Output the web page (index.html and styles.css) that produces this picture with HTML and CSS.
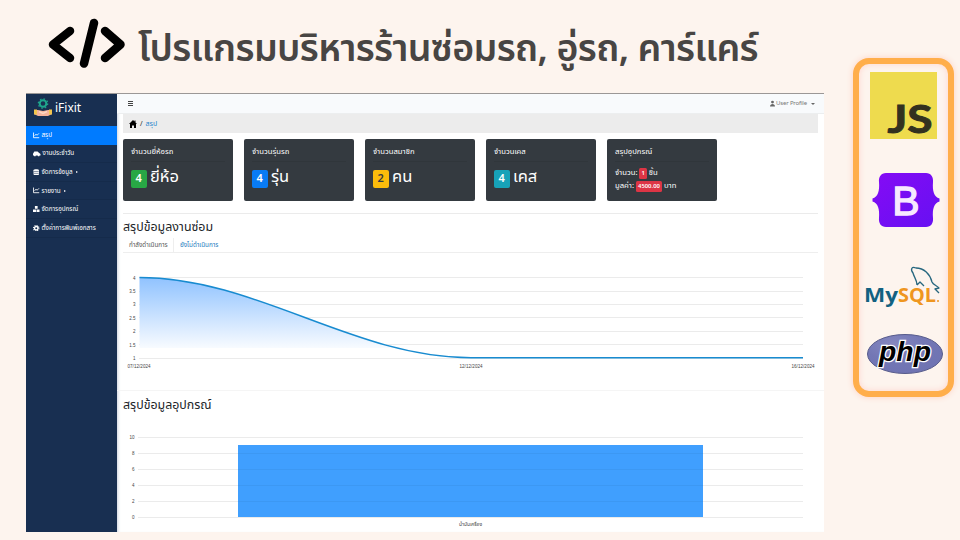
FILE: index.html
```html
<!DOCTYPE html>
<html lang="th">
<head>
<meta charset="utf-8">
<title>iFixit</title>
<link rel="stylesheet" href="styles.css">
</head>
<body>
<div class="slide">
  <div class="content">
    <header class="title">
      <svg class="code-icon" viewBox="0 0 78 52" width="78" height="52"><path d="M23 14 6 27.500 23 41M47 6 37 46.500M58 14 73.500 27.500 58 41"/></svg>
      <h1>โปรแกรมบริหารร้านซ่อมรถ, อู่รถ, คาร์แคร์</h1>
    </header>
    <div class="window">
      <aside class="sidebar">
        <div class="brand">
          <svg width="20" height="19" viewBox="0 0 20 19"><circle cx="10" cy="5.500" r="3.300" fill="none" stroke="#1fa58c" stroke-width="2"/><circle cx="10" cy="5.500" r="4.700" fill="none" stroke="#1fa58c" stroke-width="1.200" stroke-dasharray="1.600 2.080"/><path d="M1 12h4l5 1 5-1h4v4l-4 2H5l-4-2z" fill="#f6b49b"/><path d="M1 11.500h3v5H1zM16 11.500h3v5h-3z" fill="#f3c64e"/><path d="M6 13.500l4 2 4-2" fill="none" stroke="#fbd7c4" stroke-width="1.500"/></svg>
          <span>iFixit</span>
        </div>
        <nav class="menu">
          <a class="item active"><svg viewBox="0 0 12 12"><path class="line" d="M1 1v9.500h10.500M3 7l2.500-3 2 2L11 2.500"/></svg><span>สรุป</span></a>
          <a class="item"><svg class="wide" viewBox="0 0 14 12"><path d="M0 7 2.500 2.500h6L11 5l3 2.500V10H0z"/><circle cx="3.500" cy="10" r="1.700"/><circle cx="10.500" cy="10" r="1.700"/></svg><span>งานประจำวัน</span></a>
          <a class="item"><svg viewBox="0 0 12 12"><path d="M1 2.500C1 0 11 0 11 2.500v7c0 3-10 3-10 0z"/><path class="cut" d="M1.500 4.500h9M1.500 8h9"/></svg><span>จัดการข้อมูล</span><i></i></a>
          <a class="item"><svg viewBox="0 0 12 12"><path class="line" d="M1 1v9.500h10.500M3 7l2.500-3 2 2L11 2.500"/></svg><span>รายงาน</span><i></i></a>
          <a class="item"><svg viewBox="0 0 12 12"><path d="M3.500 0h5v5h-5zM0 6.500h5.500V12H0zM6.500 6.500H12V12H6.500z"/></svg><span>จัดการอุปกรณ์</span></a>
          <a class="item"><svg viewBox="0 0 12 12"><circle cx="6" cy="6" r="3.200" fill="none" stroke="#fff" stroke-width="2.600"/><circle cx="6" cy="6" r="5" fill="none" stroke="#fff" stroke-width="2" stroke-dasharray="2 1.930"/></svg><span>ตั้งค่าการพิมพ์เอกสาร</span></a>
        </nav>
      </aside>
      <main class="main">
        <div class="topbar"><span class="burger"><b></b><b></b><b></b></span>
          <span class="user"><svg width="6" height="7" viewBox="0 0 12 14"><circle cx="6" cy="3.500" r="3.400"/><path d="M0 14c0-8 12-8 12 0z"/></svg><span>User Profile</span><i></i></span>
        </div>
        <div class="breadcrumb"><svg width="8" height="8" viewBox="0 0 16 16"><path d="M8 0 0 8h2v8h4v-5h4v5h4V8h2l-3-3V1h-2v2z"/></svg><span>/</span><a>สรุป</a></div>
        <section class="cards">
          <article class="card"><h3>จำนวนยี่ห้อรถ</h3><p class="big"><b class="green">4</b><span>ยี่ห้อ</span></p></article>
          <article class="card"><h3>จำนวนรุ่นรถ</h3><p class="big"><b class="blue">4</b><span>รุ่น</span></p></article>
          <article class="card"><h3>จำนวนสมาชิก</h3><p class="big"><b class="yellow">2</b><span>คน</span></p></article>
          <article class="card"><h3>จำนวนเคส</h3><p class="big"><b class="teal">4</b><span>เคส</span></p></article>
          <article class="card"><h3>สรุปอุปกรณ์</h3><div class="small"><p>จำนวน: <b>1</b> ชิ้น</p><p>มูลค่า: <b>4500.00</b> บาท</p></div></article>
        </section>
        <section class="jobs">
          <h2>สรุปข้อมูลงานซ่อม</h2>
          <div class="tabs"><span class="tab on">กำลังดำเนินการ</span><span class="tab">ยังไม่ดำเนินการ</span></div>
          <svg class="chart" width="707" height="138" viewBox="117 253 707 138">
            <defs><linearGradient id="area" x1="0" y1="277" x2="0" y2="348" gradientUnits="userSpaceOnUse"><stop offset="0" stop-color="#8fc2ff"/><stop offset="1" stop-color="#f8fbff"/></linearGradient><clipPath id="fade"><path d="M139 270H803V348H139z"/></clipPath></defs>
            <path class="grid" d="M139 277.500H803M139 291.500H803M139 304.500H803M139 317.500H803M139 331.500H803M139 344.500H803M139 358.500H803"/>
            <path fill="url(#area)" clip-path="url(#fade)" d="M139.500 277.500C257 277.500 353 357.700 471 357.700H139.500z"/>
            <path class="curve" d="M139.500 277.500C257 277.500 353 357.700 471 357.700H803"/>
            <g class="axis end"><text x="135.500" y="279.500">4</text><text x="135.500" y="292.800">3.5</text><text x="135.500" y="306.300">3</text><text x="135.500" y="319.600">2.5</text><text x="135.500" y="333">2</text><text x="135.500" y="346.500">1.5</text><text x="135.500" y="360">1</text></g>
            <g class="axis mid"><text x="139" y="367.500" textLength="23">07/12/2024</text><text x="471" y="367.500" textLength="23">12/12/2024</text><text x="803" y="367.500" textLength="23">16/12/2024</text></g>
          </svg>
        </section>
        <section class="parts">
          <h2>สรุปข้อมูลอุปกรณ์</h2>
          <svg class="chart" width="707" height="112" viewBox="117 420 707 112">
            <path class="grid" d="M138 437.500H803M138 453.500H803M138 469.500H803M138 485.500H803M138 501.500H803M138 517.500H803"/>
            <rect x="238" y="445" width="465" height="72" fill="#409ffe"/>
            <path class="faint" d="M238 453.500H703M238 469.500H703M238 485.500H703M238 501.500H703"/>
            <g class="axis end"><text x="134.500" y="439">10</text><text x="134.500" y="455">8</text><text x="134.500" y="471">6</text><text x="134.500" y="487">4</text><text x="134.500" y="503">2</text><text x="134.500" y="519">0</text></g>
            <g class="axis mid"><text x="470.500" y="526" textLength="23" lengthAdjust="spacingAndGlyphs">น้ำมันเครื่อง</text></g>
          </svg>
        </section>
      </main>
    </div>
  </div>
  <aside class="stack">
    <svg class="js" width="67" height="67" viewBox="0 0 67 67"><path fill="#eedb4e" d="M0 0h67v67H0z"/><text x="17.500" y="60.500" textLength="45" lengthAdjust="spacingAndGlyphs">JS</text></svg>
    <svg class="bootstrap" width="68" height="54" viewBox="0 0 68 54"><defs><linearGradient id="bs" x2="1" y2="1"><stop stop-color="#850bf5"/><stop offset="1" stop-color="#6610f2"/></linearGradient></defs><path fill="url(#bs)" d="M14 0H54C59 0 61.500 4 61 9 60.300 18 62 24 67.500 25.500v3C62 30 60.300 36 61 45 61.500 50 59 54 54 54H14C9 54 6.500 50 7 45 7.700 36 6 30 .5 28.500v-3C6 24 7.700 18 7 9 6.500 4 9 0 14 0z"/><text x="34" y="41.500" text-anchor="middle">B</text></svg>
    <svg class="mysql" width="80" height="42" viewBox="0 0 80 42"><path d="M53 20C53 15 50 12 49 8 46 4 48 1 52 3 60 3 66 9 68 17 69 20 74 21 75 23L71 24 75 28M53 20 56 17 60 21"/><text x="0" y="37" textLength="34" lengthAdjust="spacingAndGlyphs" fill="#126181">My</text><text x="34" y="37" textLength="38" lengthAdjust="spacingAndGlyphs" fill="#ef961f">SQL</text><circle cx="74" cy="36" r="1" fill="#ef961f"/></svg>
    <svg class="php" width="76" height="40" viewBox="0 0 76 40"><defs><radialGradient id="pg" cx=".35" cy=".25" r=".8"><stop stop-color="#8688c0"/><stop offset=".5" stop-color="#7377b5"/><stop offset="1" stop-color="#6f73b2"/></radialGradient></defs><ellipse cx="38" cy="20" rx="37.500" ry="19.500" fill="url(#pg)" stroke="#575b8b"/><text x="12" y="26.500" textLength="52" lengthAdjust="spacingAndGlyphs">php</text></svg>
  </aside>
</div>
</body>
</html>
```
FILE: styles.css
```css
*{box-sizing:border-box}
body{margin:0;width:960px;height:540px;overflow:hidden;background:#fdf4ee;font-family:"Noto Sans Thai","Noto Sans",sans-serif;color:#212529}
h1,h2,h3,p{margin:0;font-weight:400}
svg{flex:none;display:block}
.slide{display:flex;height:540px;padding-left:26px;gap:29px}
.content{width:798px;flex:none}
.title{height:93px;display:flex;align-items:flex-start;padding:17px 0 0 21px;gap:13px}
.code-icon{fill:none;stroke:#000;stroke-width:8.500;stroke-linecap:round;stroke-linejoin:round}
h1{font-size:37.500px;line-height:66px;font-weight:600;letter-spacing:-.63px;color:#484543;white-space:nowrap}
.window{display:flex;height:439px;background:#fff;border-top:1px solid #9b9796}
.sidebar{width:91px;flex:none;background:#182f51;color:#fff}
.brand{height:32px;display:flex;align-items:center;padding:0 0 5px 7px;gap:2px;font-size:12px}
.item{height:18.600px;display:flex;align-items:center;padding:0 0 0 7px;gap:2px;font-size:6.300px;white-space:nowrap;border-bottom:1px solid #152b4b}
.item.active{background:#007bff;border:0}
.item svg{width:6.500px;height:6.500px;fill:#fff}
.item svg.wide{width:7.500px}
.item .line{fill:none;stroke:#fff;stroke-width:1.600}
.item .cut{stroke:#182f51}
.item i{border:1.500px solid transparent;border-left:2px solid #fff;margin-left:1px}
.main{flex:1;min-width:0;box-shadow:inset 3px 0 3px -2px #ccd3df}
.topbar{height:20px;background:#f8fafc;display:flex;align-items:center;justify-content:space-between;padding:0 9px 0 11px;border-bottom:1px solid #eceeef}
.burger{display:grid;gap:1px}
.burger b{width:5px;height:1px;background:#444}
.user{display:flex;align-items:center;font-size:6px;gap:1px;color:#777;letter-spacing:-.15px}
.user svg{width:5px;fill:#666}
.user i{border:2px solid transparent;border-top-color:#666;border-bottom:0;margin-left:3px}
.breadcrumb{height:19px;margin:0 6px;background:#ececec;display:flex;align-items:center;padding-left:6px;gap:3px;font-size:7px}
.breadcrumb a{color:#2483cb}
.cards{display:flex;gap:11.500px;height:81px;margin:0 6px;padding-top:6px;border-bottom:1px solid #ebebeb}
.card{width:109.500px;flex:none;height:62px;background:#343a40;color:#fff;border-radius:2px;padding:6.500px 8px}
.card h3{font-size:7.700px;line-height:12px;height:16px;border-bottom:1px solid #30363b;white-space:nowrap}
.big{display:flex;align-items:center;gap:3.500px;padding-top:8px;font-size:16.500px;line-height:18px}
.big span{position:relative;top:-1.500px}
.big b{width:15.500px;height:18px;border-radius:2px;font-size:11px;font-weight:600;text-align:center}
.green{background:#28a745}.blue{background:#087bf5}.yellow{background:#fbbc0b;color:#343a40}.teal{background:#17a2b8}
.small{padding-top:5px;font-size:7.700px;line-height:12.500px;white-space:nowrap}
.small b{background:#dc3545;border-radius:1.500px;padding:1px 2px;font-size:5.900px;font-weight:600}
h2{font-size:12.400px;line-height:20px;padding-left:6px}
.jobs{height:176px;padding-top:4px}
.jobs h2{height:20px}
.tabs{height:15px;margin:0 6px;display:flex;border-bottom:1px solid #eee;font-size:6.300px;line-height:15px;white-space:nowrap}
.tab{padding-left:6px;color:#1979bd}
.tab.on{width:51px;color:#555;border-right:1px solid #eee}
.parts{border-top:1px solid #f5f5f5;padding-top:5px}
.parts h2{height:24px}
.grid{fill:none;stroke:#ebebeb}
.faint{stroke:#3c98f3}
.curve{fill:none;stroke:#188bd0;stroke-width:1.500}
.axis{font-family:"Liberation Sans","Noto Sans Thai",sans-serif;font-size:4.500px;fill:#444}
.end{text-anchor:end}.mid{text-anchor:middle}
.stack{width:101px;height:339px;margin-top:58px;border:6px solid #ffae4b;border-radius:16px;background:#fdf4ee;box-shadow:0 0 6px #ffd0c0,inset 0 0 6px #ffd4cc;display:flex;flex-direction:column;align-items:center;flex:none}
.js{margin-top:8px}
.js text{font:700 39px Lato,sans-serif;fill:#33311f;stroke:#33311f}
.bootstrap{margin:34px 0 0 4px}
.bootstrap text{font:400 41px "Liberation Sans",sans-serif;fill:#f7e9ff;stroke:#f7e9ff;stroke-width:1.300}
.mysql{margin:38px 0 0 1px}
.mysql path{fill:none;stroke:#27677f;stroke-width:1.300;stroke-linejoin:round}
.mysql text{font:700 19px "Open Sans",sans-serif}
.php{margin:27px 0 0 2px}
.php text{font:italic 700 27px "Liberation Sans",sans-serif;stroke:#fff;stroke-width:2.500;paint-order:stroke}
```
